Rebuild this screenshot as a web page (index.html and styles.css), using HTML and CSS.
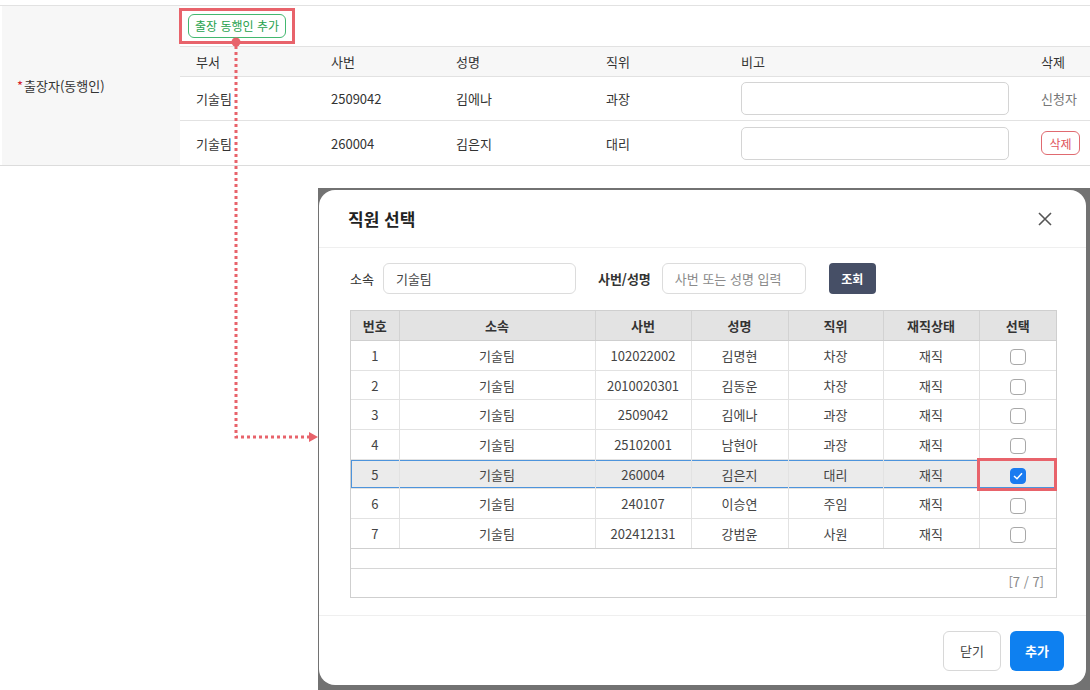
FILE: index.html
```html
<!DOCTYPE html>
<html lang="ko">
<head>
    <meta charset="UTF-8">
    <meta name="viewport" content="width=device-width, initial-scale=1.0">
    <title>출장자 동행인 선택</title>
    <link rel="stylesheet" href="styles.css">
</head>
<body>
    <!-- 출장 신청서의 동행인 행 -->
    <div class="form-row">
        <div class="form-label"><span class="req">*</span>출장자(동행인)</div>
        <div class="form-cell">
            <div class="cell-tools">
                <button type="button" class="btn-line-green">출장 동행인 추가</button>
            </div>
            <table class="member-table">
                <colgroup>
                    <col style="width:135px"><col style="width:125px"><col style="width:150px">
                    <col style="width:135px"><col style="width:300px"><col>
                </colgroup>
                <thead>
                    <tr><th>부서</th><th>사번</th><th>성명</th><th>직위</th><th>비고</th><th>삭제</th></tr>
                </thead>
                <tbody>
                    <tr>
                        <td>기술팀</td><td>2509042</td><td>김에나</td><td>과장</td>
                        <td><input type="text" class="memo"></td>
                        <td class="muted">신청자</td>
                    </tr>
                    <tr>
                        <td>기술팀</td><td>260004</td><td>김은지</td><td>대리</td>
                        <td><input type="text" class="memo"></td>
                        <td><button type="button" class="btn-line-red">삭제</button></td>
                    </tr>
                </tbody>
            </table>
        </div>
    </div>

    <!-- 안내용 표시: 버튼 강조와 점선 화살표 -->
    <div class="mark mark-add"></div>
    <svg class="guide-arrow" width="330" height="450" viewBox="0 0 330 450">
        <circle cx="236" cy="42" r="4.5" fill="#e8636b"/>
        <path d="M236 46 V437 H309" fill="none" stroke="#e8636b" stroke-width="3" stroke-dasharray="3 3"/>
        <polygon points="309,432 318,437 309,442" fill="#e8636b"/>
    </svg>

    <!-- 직원 선택 팝업 -->
    <div class="modal-shot">
        <div class="modal-panel">
            <div class="modal-head">
                <h2>직원 선택</h2>
                <span class="close">
                    <svg width="16" height="16" viewBox="0 0 16 16">
                        <path d="M2 2 L14 14 M14 2 L2 14" stroke="#555" stroke-width="1.6" fill="none"/>
                    </svg>
                </span>
            </div>
            <div class="modal-body">
                <div class="search-row">
                    <label class="lbl">소속</label>
                    <input type="text" class="inp inp-dept" value="기술팀">
                    <label class="lbl lbl-bold">사번/성명</label>
                    <input type="text" class="inp inp-name" placeholder="사번 또는 성명 입력">
                    <button type="button" class="btn-search">조회</button>
                </div>

                <div class="grid">
                    <table class="grid-table">
                        <colgroup>
                            <col style="width:48px"><col style="width:196px"><col style="width:96px">
                            <col style="width:97px"><col style="width:95px"><col style="width:96px"><col>
                        </colgroup>
                        <thead>
                            <tr><th>번호</th><th>소속</th><th>사번</th><th>성명</th><th>직위</th><th>재직상태</th><th>선택</th></tr>
                        </thead>
                        <tbody>
                            <tr><td>1</td><td>기술팀</td><td>102022002</td><td>김명현</td><td>차장</td><td>재직</td><td><span class="chk"></span></td></tr>
                            <tr><td>2</td><td>기술팀</td><td>2010020301</td><td>김동운</td><td>차장</td><td>재직</td><td><span class="chk"></span></td></tr>
                            <tr><td>3</td><td>기술팀</td><td>2509042</td><td>김에나</td><td>과장</td><td>재직</td><td><span class="chk"></span></td></tr>
                            <tr><td>4</td><td>기술팀</td><td>25102001</td><td>남현아</td><td>과장</td><td>재직</td><td><span class="chk"></span></td></tr>
                            <tr class="selected"><td>5</td><td>기술팀</td><td>260004</td><td>김은지</td><td>대리</td><td>재직</td>
                                <td><span class="chk on">
                                    <svg width="10" height="8" viewBox="0 0 10 8"><path d="M1 4 L4 6.8 L9 1.2" stroke="#fff" stroke-width="1.5" fill="none"/></svg>
                                </span></td></tr>
                            <tr><td>6</td><td>기술팀</td><td>240107</td><td>이승연</td><td>주임</td><td>재직</td><td><span class="chk"></span></td></tr>
                            <tr><td>7</td><td>기술팀</td><td>202412131</td><td>강범윤</td><td>사원</td><td>재직</td><td><span class="chk"></span></td></tr>
                        </tbody>
                    </table>
                    <div class="grid-empty"></div>
                    <div class="grid-foot">[7 / 7]</div>
                </div>
            </div>
            <div class="modal-foot">
                <button type="button" class="btn-close">닫기</button>
                <button type="button" class="btn-primary">추가</button>
            </div>
        </div>
    </div>

    <div class="mark mark-check"></div>
</body>
</html>
```

FILE: styles.css
```css
/* 기본 */
body {
    margin: 0;
    font-family: "Noto Sans CJK KR", "Noto Sans", sans-serif;
    font-size: 13px;
    color: #333;
    background: #fff;
    height: 690px;
    overflow: hidden;
    position: relative;
}

button, input {
    font-family: inherit;
}

/* 신청서 행 */
.form-row {
    margin-top: 5px;
    display: grid;
    grid-template-columns: 180px 1fr;
    border-top: 1px solid #e2e2e2;
    border-bottom: 1px solid #dcdcdc;
}

.form-label {
    margin-left: 2px;
    background: #f7f7f7;
    display: flex;
    align-items: center;
    padding-left: 15px;
    font-size: 13px;
    color: #333;
}

.req {
    color: #d6202b;
    margin-right: 1px;
}

.cell-tools {
    height: 40px;
    padding: 8px 0 0 8px;
    box-sizing: border-box;
}

.btn-line-green {
    height: 24px;
    width: 98px;
    padding: 0;
    border: 1px solid #43b870;
    border-radius: 6px;
    background: #fff;
    color: #26a24d;
    font-size: 12px;
    line-height: 22px;
}

.member-table {
    width: 100%;
    border-collapse: collapse;
    table-layout: fixed;
}

.member-table th {
    height: 29px;
    padding: 0 16px;
    text-align: left;
    font-weight: normal;
    background: #f7f7f7;
    border-top: 1px solid #e2e2e2;
    border-bottom: 1px solid #e2e2e2;
}

.member-table td {
    height: 43px;
    padding: 0 16px;
    white-space: nowrap;
    border-bottom: 1px solid #e2e2e2;
}

.member-table tbody tr:last-child td {
    height: 44px;
    border-bottom: none;
}

.member-table .muted {
    color: #777;
}

.memo {
    width: 100%;
    height: 33px;
    box-sizing: border-box;
    border: 1px solid #d4d4d4;
    border-radius: 5px;
    display: block;
}

.btn-line-red {
    height: 24px;
    width: 39px;
    padding: 0;
    border: 1px solid #e06a70;
    border-radius: 6px;
    background: #fff;
    color: #e0555c;
    font-size: 12px;
}

/* 안내 표시 */
.mark {
    position: absolute;
    border: 3px solid #e8636b;
    box-sizing: border-box;
    z-index: 5;
}

.mark-add {
    left: 179px;
    top: 8px;
    width: 116px;
    height: 36px;
}

.mark-check {
    left: 977px;
    top: 458px;
    width: 80px;
    height: 33px;
}

.guide-arrow {
    position: absolute;
    left: 0;
    top: 0;
    z-index: 4;
}

/* 팝업 캡처 */
.modal-shot {
    position: absolute;
    left: 318px;
    top: 188px;
    width: 772px;
    height: 502px;
    box-sizing: border-box;
    padding: 2px 4px 5px 1px;
    background: #727272;
}

.modal-panel {
    height: 100%;
    background: #fff;
    border-radius: 16px;
    display: flex;
    flex-direction: column;
}

.modal-head {
    height: 57px;
    padding: 0 33px 0 29px;
    display: flex;
    align-items: center;
    justify-content: space-between;
    border-bottom: 1px solid #efefef;
}

.modal-head h2 {
    margin: 0;
    font-size: 17px;
    font-weight: 700;
    color: #222;
}

.close {
    display: flex;
}

.modal-body {
    padding: 15px 29px 17px 31px;
    border-bottom: 1px solid #efefef;
}

.search-row {
    display: flex;
    align-items: center;
    height: 31px;
}

.lbl {
    font-size: 13px;
    color: #333;
    margin-right: 9px;
}

.lbl-bold {
    font-weight: 700;
    margin-right: 11px;
}

.inp {
    height: 31px;
    box-sizing: border-box;
    border: 1px solid #dcdcdc;
    border-radius: 6px;
    padding: 0 12px;
    font-size: 13px;
    color: #444;
}

.inp::placeholder {
    color: #8a8a8a;
}

.inp-dept {
    width: 193px;
    margin-right: 22px;
}

.inp-name {
    width: 144px;
    margin-right: 23px;
}

.btn-search {
    width: 47px;
    height: 31px;
    border: none;
    border-radius: 4px;
    background: #464f66;
    color: #fff;
    font-size: 12px;
    font-weight: 700;
}

/* 목록 그리드 */
.grid {
    margin-top: 16px;
    border: 1px solid #cfcfcf;
}

.grid-table {
    width: 100%;
    border-collapse: collapse;
    table-layout: fixed;
}

.grid-table th {
    height: 29px;
    padding: 0;
    background: #e3e3e3;
    font-weight: 700;
    color: #333;
    border-right: 1px solid #d2d2d2;
    border-bottom: 1px solid #cfcfcf;
}

.grid-table td {
    height: 28.7px;
    padding: 0;
    text-align: center;
    color: #444;
    border-right: 1px solid #e2e2e2;
    border-bottom: 1px solid #e2e2e2;
}

.grid-table th:last-child,
.grid-table td:last-child {
    border-right: none;
}

.grid-table tbody tr:last-child td {
    border-bottom: 1px solid #cfcfcf;
}

.grid-table tr.selected td {
    background: #ebebeb;
    box-shadow: inset 0 1px 0 #4d94dc, inset 0 -1px 0 #4d94dc;
}

.grid-table tr.selected td:first-child {
    box-shadow: inset 0 1px 0 #4d94dc, inset 0 -1px 0 #4d94dc, inset 1px 0 0 #4d94dc;
}

.grid-table tr.selected td:last-child {
    box-shadow: inset 0 1px 0 #4d94dc, inset 0 -1px 0 #4d94dc, inset -1px 0 0 #4d94dc;
}

.chk {
    display: inline-flex;
    align-items: center;
    justify-content: center;
    width: 16px;
    height: 16px;
    box-sizing: border-box;
    border: 1px solid #a8a8a8;
    border-radius: 4px;
    background: #fff;
    vertical-align: middle;
}

.chk.on {
    background: #1a7bf0;
    border-color: #1a7bf0;
}

.grid-empty {
    height: 19px;
    border-bottom: 1px solid #d6d6d6;
}

.grid-foot {
    height: 28px;
    line-height: 26px;
    text-align: right;
    padding-right: 12px;
    color: #888;
    font-size: 13px;
}

/* 하단 버튼 */
.modal-foot {
    display: flex;
    justify-content: flex-end;
    gap: 9px;
    padding: 15px 22px 0 0;
}

.btn-close {
    width: 58px;
    height: 40px;
    border: 1px solid #d8d8d8;
    border-radius: 6px;
    background: #fff;
    color: #444;
    font-size: 13px;
}

.btn-primary {
    width: 54px;
    height: 40px;
    border: none;
    border-radius: 6px;
    background: #0e80f0;
    color: #fff;
    font-size: 13px;
    font-weight: 700;
}
```
